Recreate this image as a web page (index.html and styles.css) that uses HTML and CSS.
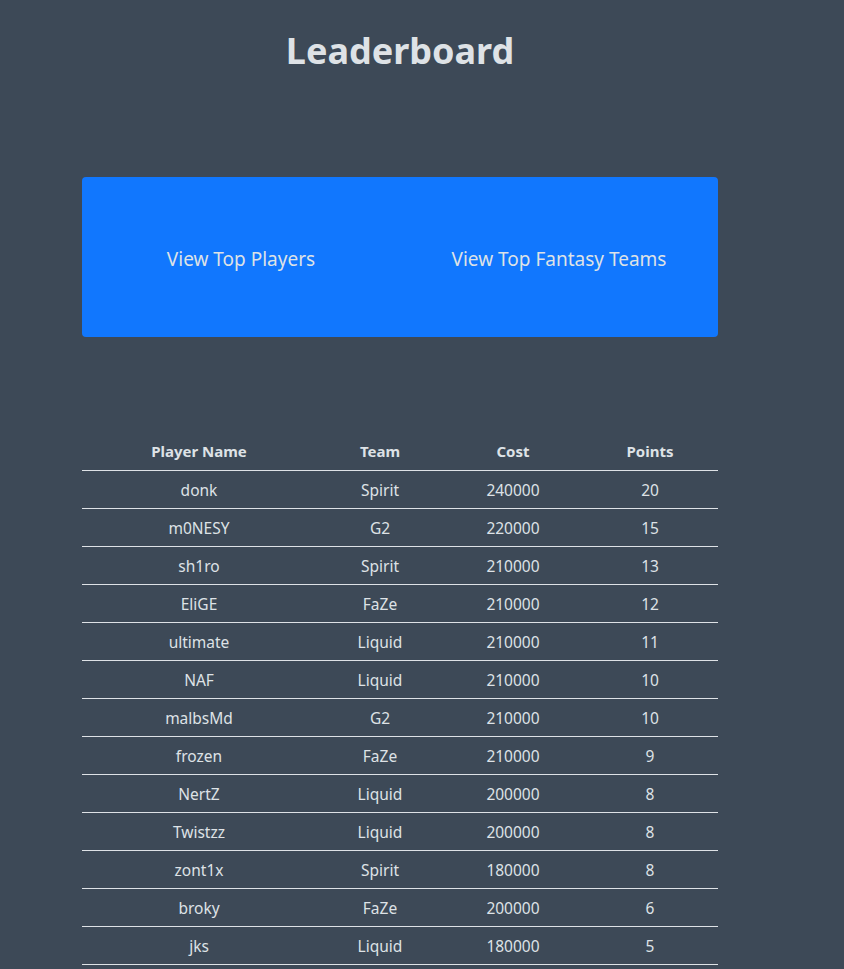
FILE: index.html
```html
<!DOCTYPE html>
<html>
<head>
<meta charset="utf-8">
<title>Leaderboard</title>
<link rel="stylesheet" href="styles.css">
</head>
<body>
<div class="page">
  <h1 class="title">Leaderboard</h1>
  <div class="nav-box">
    <button class="nav-btn">View Top Players</button>
    <button class="nav-btn">View Top Fantasy Teams</button>
  </div>
  <table class="board">
    <colgroup>
      <col class="c1"><col class="c2"><col class="c3"><col class="c4">
    </colgroup>
    <thead>
      <tr><th>Player Name</th><th>Team</th><th>Cost</th><th>Points</th></tr>
    </thead>
    <tbody>
      <tr><td>donk</td><td>Spirit</td><td>240000</td><td>20</td></tr>
      <tr><td>m0NESY</td><td>G2</td><td>220000</td><td>15</td></tr>
      <tr><td>sh1ro</td><td>Spirit</td><td>210000</td><td>13</td></tr>
      <tr><td>EliGE</td><td>FaZe</td><td>210000</td><td>12</td></tr>
      <tr><td>ultimate</td><td>Liquid</td><td>210000</td><td>11</td></tr>
      <tr><td>NAF</td><td>Liquid</td><td>210000</td><td>10</td></tr>
      <tr><td>malbsMd</td><td>G2</td><td>210000</td><td>10</td></tr>
      <tr><td>frozen</td><td>FaZe</td><td>210000</td><td>9</td></tr>
      <tr><td>NertZ</td><td>Liquid</td><td>200000</td><td>8</td></tr>
      <tr><td>Twistzz</td><td>Liquid</td><td>200000</td><td>8</td></tr>
      <tr><td>zont1x</td><td>Spirit</td><td>180000</td><td>8</td></tr>
      <tr><td>broky</td><td>FaZe</td><td>200000</td><td>6</td></tr>
      <tr><td>jks</td><td>Liquid</td><td>180000</td><td>5</td></tr>
    </tbody>
  </table>
</div>
</body>
</html>
```
FILE: styles.css
```css
html, body {
  margin: 0;
  padding: 0;
  background: #3d4957;
}
body {
  font-family: "Noto Sans", "Open Sans", sans-serif;
  color: #dee2e6;
}
.page {
  width: 636px;
  margin-left: 82px;
  padding-top: 23px;
}
.title {
  margin: 0;
  text-align: center;
  font-size: 36px;
  font-weight: 700;
  line-height: 56px;
  color: #dee2e6;
}
.nav-box {
  margin-top: 98px;
  height: 160px;
  background: #1177fe;
  border-radius: 4px;
  display: flex;
}
.nav-btn {
  flex: 1;
  background: transparent;
  border: none;
  color: #dee2e6;
  font-family: inherit;
  font-size: 19px;
  padding: 3px 0 0;
  cursor: pointer;
}
.board {
  margin-top: 95px;
  width: 636px;
  border-collapse: collapse;
  text-align: center;
}
.c1 { width: 234px; }
.c2 { width: 128px; }
.c3 { width: 138px; }
.c4 { width: 136px; }
.board th {
  font-size: 15px;
  font-weight: 700;
  height: 38px;
  padding: 0;
  border-bottom: 1px solid #dee2e6;
}
.board td {
  font-size: 15.5px;
  height: 37px;
  padding: 0;
  border-bottom: 1px solid #dee2e6;
}
```
